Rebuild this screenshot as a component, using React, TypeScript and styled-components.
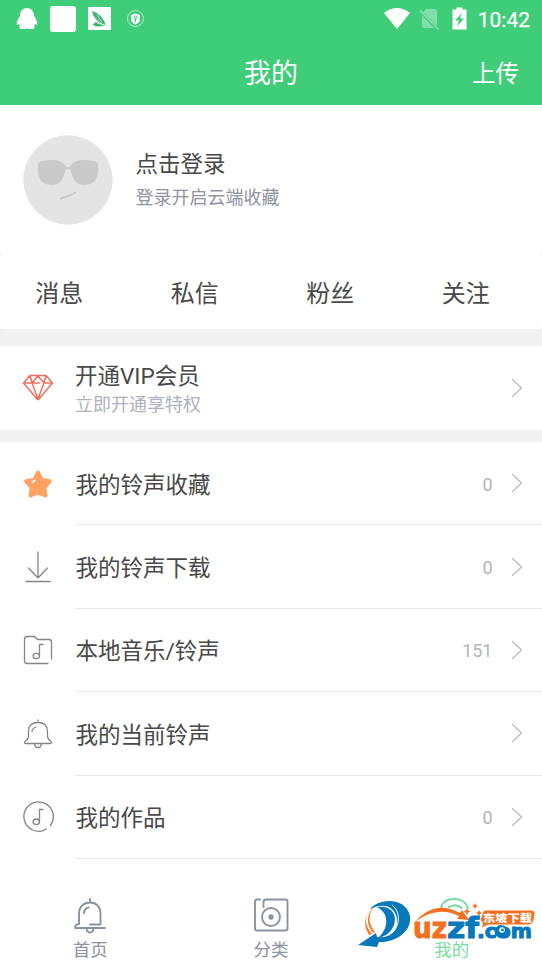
import React from 'react';
import styled, { createGlobalStyle } from 'styled-components';

const GlobalStyle = createGlobalStyle`
  * { box-sizing: border-box; }
  body { margin: 0; background: #fff; }
`;

const Screen = styled.div`
  width: 542px;
  height: 963px;
  overflow: hidden;
  display: flex;
  flex-direction: column;
  background: #fff;
  color: #484848;
  font-family: Roboto, 'Noto Sans CJK SC', sans-serif;
`;

const Header = styled.header`
  height: 105px;
  flex: none;
  background: #3fcd7a;
  color: #fff;
`;

const StatusBar = styled.div`
  height: 38px;
  padding: 0 12px 0 16px;
  display: flex;
  justify-content: space-between;
  align-items: center;
`;

const StatusGroup = styled.div`
  display: flex;
  align-items: center;
  svg { display: block; }
`;

const Clock = styled.span`
  margin-left: 9px;
  font-size: 21px;
  line-height: 38px;
  font-weight: 400;
  -webkit-text-stroke: 0.25px #fff;
  padding-top: 2px;
`;

const TitleBar = styled.div`
  height: 67px;
  padding: 4px 23px 0;
  display: grid;
  grid-template-columns: 1fr auto 1fr;
  align-items: center;
`;

const Title = styled.h1`
  grid-column: 2;
  margin: 0;
  font-size: 27px;
  line-height: 40px;
  font-weight: 400;
`;

const Upload = styled.span`
  justify-self: end;
  font-size: 23.5px;
  line-height: 36px;
`;

const Profile = styled.section`
  height: 149px;
  flex: none;
  display: flex;
  align-items: center;
  padding-left: 22.5px;
  gap: 23px;
`;

const Lines = styled.div`
  display: flex;
  flex-direction: column;
  padding-top: 3px;
`;

const ProfileName = styled.span`
  font-size: 22.5px;
  line-height: 34px;
`;

const ProfileHint = styled.span`
  font-size: 18px;
  line-height: 34px;
  color: #8f94a1;
`;

const TabsShell = styled.div`
  background: #f1f1f1;
  flex: none;
  height: 92px;
`;

const Tabs = styled.nav`
  height: 75px;
  display: flex;
  background: #fff;
  border-radius: 4px;
`;

const Tab = styled.span`
  flex: 1;
  padding-right: 17px;
  text-align: center;
  font-size: 24px;
  line-height: 80px;
`;

const Band = styled.div`
  height: 12px;
  flex: none;
  background: #f1f1f1;
`;

const VipRow = styled.section`
  height: 84px;
  flex: none;
  display: flex;
  align-items: center;
  padding-right: 19px;
`;

const VipLines = styled(Lines)`
  flex: 1;
  padding: 4px 0 0 0;
`;

const IconCell = styled.div`
  width: 75px;
  flex: none;
  display: flex;
  justify-content: center;
  align-items: center;
  svg { display: block; }
`;

const VipTitle = styled.span`
  font-size: 22.5px;
  line-height: 29px;
`;

const VipHint = styled.span`
  font-size: 18px;
  line-height: 27px;
  color: #adb1bd;
`;

const Row = styled.div`
  height: 83.4px;
  flex: none;
  display: flex;
`;

const RowBody = styled.div`
  flex: 1;
  border-bottom: 1px solid #e9e9e9;
  display: flex;
  align-items: center;
  padding-right: 19px;
`;

const RowLabel = styled.span`
  flex: 1;
  padding: 3px 0 0 0.5px;
  font-size: 22.5px;
  line-height: 34px;
`;

const Count = styled.span`
  font-size: 18px;
  line-height: 24px;
  color: #b0b4bd;
  margin-right: 18.5px;
  padding-top: 3px;
`;

const BottomNav = styled.nav`
  position: relative;
  flex: 1;
  display: flex;
`;

const NavItem = styled.div<{ $active?: boolean }>`
  flex: 1;
  display: flex;
  flex-direction: column;
  align-items: center;
  padding-top: 38px;
  color: ${p => (p.$active ? '#7bdca3' : '#8b91a0')};
  font-size: 17.5px;
  line-height: 31px;
  svg { display: block; }
`;

const Watermark = styled.svg`
  position: absolute;
  left: 350px;
  top: 26px;
`;

const line = { fill: 'none', stroke: 'currentColor', strokeLinecap: 'round', strokeLinejoin: 'round' } as const;

const Chevron = () => (
  <svg width="12" height="20" viewBox="0 0 12 20" {...line} stroke="#b9bbc2" strokeWidth="1.3">
    <path d="M1.5 1.5 10.5 10 1.5 18.5" />
  </svg>
);

const Avatar = () => (
  <svg width="90" height="90" viewBox="0 0 90 90">
    <circle cx="45" cy="45" r="44.7" fill="#e4e4e4" />
    <path d="M15 29Q16 26 22 25.5Q37 23.5 41 29Q43 32.500 45 32.500T49 29Q53 23.500 68 25.500Q74 26 75 29Q77 50 61 50Q50 50 47.500 34.500H42.500Q40 50 29 50Q13 50 15 29Z" fill="#c9c9c9" />
    <path d="M38 63.500Q46 61.500 52 57.500" fill="none" stroke="#c9c9c9" strokeWidth="2" strokeLinecap="round" />
  </svg>
);

const StatusLeftIcons = () => (
  <svg width="132" height="30" viewBox="16 4 132 30" fill="#fff">
    <path d="M27 8C22 8 20 12 20 16C18 19 16.500 21 16.800 25L19 24L20 26Q18 29 22 29H26L27 28L28 29H32Q36 29 34 26L35 24L37.200 25C37.500 21 36 19 34 16C34 12 32 8 27 8Z" />
    <rect x="50" y="6" width="26" height="26" rx="3" />
    <rect x="88" y="7" width="23" height="23" rx="1" />
    <path d="M92 11Q101 13 106 25L100 23Q94 20 92 11Z" fill="#3fb573" />
    <path d="M92.500 24.500 96 22 100 24 105 26 96 26.500Z" fill="#3fb573" />
    <path d="M93 16 102 24M92 19 99 24M97 15 102 22" stroke="#fff" strokeWidth=".6" />
    <circle cx="135.500" cy="18.500" r="8" fill="none" stroke="#b5ebca" strokeWidth="1" />
    <path d="M135.500 13.500 140 15V19Q140 22.500 135.500 24.500Q131 22.500 131 19V15Z" />
    <path d="M135.500 18V22" stroke="#3fcd7a" />
    <circle cx="135.500" cy="17.500" r="1.500" fill="none" stroke="#3fcd7a" />
  </svg>
);

const StatusRightIcons = () => (
  <svg width="86" height="26" viewBox="382 6 86 26" fill="#fff">
    <path d="M383 13Q396 3 409 13L396 29Z" />
    <path d="M425 9H434Q436 9 436 11V26L422 12Z M421 15 433 28H423Q421 28 421 26Z" opacity=".35" />
    <path d="M419 10.500 437.500 29.500" stroke="#8ee2b0" strokeWidth="1.300" />
    <path d="M455.500 7.500H461.500V9.500H465.500V29.500H451.500V9.500H455.500Z" />
    <path d="M461 13 454 20.500H458L456 26.500 463 18.500H459Z" fill="#3fcd7a" />
  </svg>
);

const Diamond = () => (
  <svg width="32" height="28" viewBox="0 0 32 28" {...line} stroke="#ed705f" strokeWidth="1.500">
    <path d="M8 1.500H24L30.500 9 16.500 25.500H15.500L1.500 9ZM1.500 9H17.500M21.500 9H30.500M8 1.500 10 9 16 25 22 9 24 1.500M10 9 16 2 22 9" />
  </svg>
);

const Star = () => (
  <svg width="30" height="30" viewBox="0 0 30 30">
    <path d="M15 3.500 18.800 10.800 27 12.200 21.500 18.500 22.600 26.500 15 23.700 7.400 26.500 8.500 18.500 3 12.200 11.200 10.800Z" fill="#ffa163" stroke="#ffa163" strokeWidth="3.800" strokeLinejoin="round" />
    <path d="M9.500 13.500Q10.500 12 12 11.500" fill="none" stroke="#fff" strokeWidth="1.500" strokeLinecap="round" />
  </svg>
);

const Download = () => (
  <svg width="28" height="34" viewBox="0 0 28 34" {...line} stroke="#858585" strokeWidth="1.300">
    <path d="M14 2V27.500M4.500 18 13.500 27.500M23.500 18 14.500 27.500M2 31.500H26" />
  </svg>
);

const Folder = () => (
  <svg width="30" height="30" viewBox="0 0 30 30" {...line} stroke="#858585" strokeWidth="1.300">
    <path d="M28.500 24V7Q28.500 4.500 26 4.500H14.500L11.500 1.500H4Q1.500 1.500 1.500 4V26Q1.500 28.500 4 28.500H25" />
    <path d="M20 9.500H16.500V20.500" />
    <ellipse cx="13.300" cy="21" rx="3.200" ry="2.600" />
  </svg>
);

const Bell = () => (
  <svg width="30" height="30" viewBox="0 0 30 30" {...line} stroke="#858585" strokeWidth="1.300">
    <path d="M15 1V3.500M5.500 12.500Q5.500 3.500 15 3.500T24.500 12.500V17Q24.500 20 27.500 22Q30 24 27 24.500H3Q0 24 2.500 22Q5.500 20 5.500 17ZM11.500 24.800Q12 28.500 15 28.500T18.500 24.800M9 12.500Q9.500 9 13 8" />
  </svg>
);

const Works = () => (
  <svg width="32" height="32" viewBox="0 0 32 32" {...line} stroke="#858585" strokeWidth="1.300">
    <path d="M28.300 24.500A14.700 14.700 0 1 0 24.500 28" />
    <path d="M21 8.500H17.500V20.500" />
    <ellipse cx="14.300" cy="20.800" rx="3.200" ry="2.800" />
  </svg>
);

const HomeBell = () => (
  <svg width="34" height="38" viewBox="0 0 34 38" {...line} strokeWidth="1.900">
    <path d="M17 2V5.500M17 27.500H27.500V17C27.500 9.500 23 5.500 17 5.500S6 9.500 6 17V27Q1.500 27.500 2.300 31H32M13.500 31.500Q14 35.500 17 35.500T20.500 31.500M11 16Q11.300 11.500 15.500 10.500" />
  </svg>
);

const Category = () => (
  <svg width="36" height="38" viewBox="0 0 36 38" {...line} strokeWidth="1.900">
    <path d="M7 2.500H4Q2 2.500 2 4.500V31.500Q2 33.500 4 33.500H32.500Q34.500 33.500 34.500 31.500V4.500Q34.500 2.500 32.500 2.500H13Q10.500 2.500 10.500 5V10" />
    <circle cx="18" cy="20" r="9" />
    <circle cx="18" cy="20" r="1.700" fill="currentColor" />
  </svg>
);

const Mine = () => (
  <svg width="36" height="38" viewBox="0 0 36 38" {...line} strokeWidth="2.200">
    <path d="M7 11Q9 2 20 2Q31 2 34 11M15 10Q23 6.500 27.500 11" />
  </svg>
);

const SiteMark = () => (
  <Watermark width="192" height="78" viewBox="0 0 192 78">
    <path d="M22 23Q10 35 22 49L19 50Q10 35 22 23ZM25 20Q14 34 25 47L23 48Q12 34 25 20Z" fill="#f37a28" />
    <path d="M20 24C29 13 54 12 59.500 29C64 46 45 58 29 57L27 62 8 60 26 48 27 52C44 54 50 41 46 30C42 20 32 18 20 24Z" fill="#0878bd" />
    <path d="M27 22C48 19 50 41 36 50L27 54C40 43 39 28 27 22Z" fill="#0878bd" />
    <path d="M42 20C52 28 49 42 42 48" fill="none" stroke="#fff" strokeWidth="1" />
    <path d="M65 37Q84 14 110 28L112 25 119 35 107 34 109 31Q87 20 65 37Z" fill="#f37021" />
    <path d="m117 23 1.200 2.500 2.500 1-2.500 1-1.200 2.500-1.200-2.500-2.500-1 2.500-1ZM125 18l1 2 2 1-2 1-1 2-1-2-2-1 2-1ZM129 25l1 2 2 1-2 1-1 2-1-2-2-1 2-1Z" fill="#f37021" />
    <g fontFamily="'DejaVu Sans', sans-serif" fontWeight="700" strokeWidth="1">
      <text x="63" y="52.500" fontSize="28" textLength="34" lengthAdjust="spacingAndGlyphs" fill="#f37021" stroke="#f37021">uz</text>
      <text x="97" y="52.500" fontSize="28" textLength="32" lengthAdjust="spacingAndGlyphs" fill="#0878bd" stroke="#0878bd">zf</text>
      <text x="127" y="52.500" fontSize="20" textLength="55" lengthAdjust="spacingAndGlyphs" fill="#0878bd" stroke="#0878bd">.com</text>
    </g>
    <circle cx="151" cy="46.500" r="6.500" fill="#0878bd" />
    <circle cx="152" cy="45" r="2.800" fill="#fff" />
    <circle cx="152.500" cy="45" r="1.400" fill="#0878bd" />
    <path d="M134 25.500H181Q185 25.500 184.500 29L183.500 35Q182.500 39.500 178 39.500H138L132 42.500 133 38 130.500 35Z" fill="#f37021" />
    <text x="133" y="36.500" fontFamily="'Noto Sans CJK SC', sans-serif" fontWeight="900" fontSize="10.500" textLength="49" lengthAdjust="spacingAndGlyphs" fill="#fff">东坡下载</text>
  </Watermark>
);

const tabs = ['消息', '私信', '粉丝', '关注'];

const rows = [
  { icon: <Star />, label: '我的铃声收藏', count: '0' },
  { icon: <Download />, label: '我的铃声下载', count: '0' },
  { icon: <Folder />, label: '本地音乐/铃声', count: '151' },
  { icon: <Bell />, label: '我的当前铃声', count: '' },
  { icon: <Works />, label: '我的作品', count: '0' },
];

export default function App() {
  return (
    <>
      <GlobalStyle />
      <Screen>
        <Header>
          <StatusBar>
            <StatusGroup><StatusLeftIcons /></StatusGroup>
            <StatusGroup><StatusRightIcons /><Clock>10:42</Clock></StatusGroup>
          </StatusBar>
          <TitleBar>
            <Title>我的</Title>
            <Upload>上传</Upload>
          </TitleBar>
        </Header>
        <Profile>
          <Avatar />
          <Lines>
            <ProfileName>点击登录</ProfileName>
            <ProfileHint>登录开启云端收藏</ProfileHint>
          </Lines>
        </Profile>
        <TabsShell>
          <Tabs>
            {tabs.map(t => <Tab key={t}>{t}</Tab>)}
          </Tabs>
        </TabsShell>
        <VipRow>
          <IconCell><Diamond /></IconCell>
          <VipLines>
            <VipTitle>开通VIP会员</VipTitle>
            <VipHint>立即开通享特权</VipHint>
          </VipLines>
          <Chevron />
        </VipRow>
        <Band />
        {rows.map(r => (
          <Row key={r.label}>
            <IconCell>{r.icon}</IconCell>
            <RowBody>
              <RowLabel>{r.label}</RowLabel>
              {r.count && <Count>{r.count}</Count>}
              <Chevron />
            </RowBody>
          </Row>
        ))}
        <BottomNav>
          <NavItem><HomeBell />首页</NavItem>
          <NavItem><Category />分类</NavItem>
          <NavItem $active><Mine />我的</NavItem>
          <SiteMark />
        </BottomNav>
      </Screen>
    </>
  );
}
